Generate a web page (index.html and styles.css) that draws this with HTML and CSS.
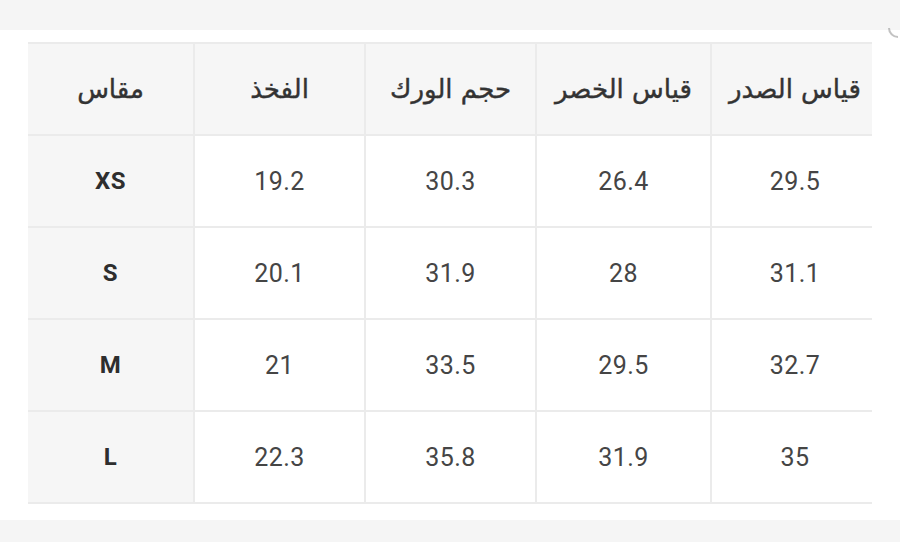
FILE: index.html
```html
<!DOCTYPE html>
<html lang="ar">
<head>
<meta charset="utf-8">
<title>جدول المقاسات</title>
<link rel="stylesheet" href="styles.css">
</head>
<body>
<div class="topbar"><span class="corner"></span></div>
<main class="main">
  <div class="frame">
    <div class="grid" dir="rtl">
      <div class="cell head">قياس الصدر</div>
      <div class="cell head">قياس الخصر</div>
      <div class="cell head">حجم الورك</div>
      <div class="cell head">الفخذ</div>
      <div class="cell head size">مقاس</div>

      <div class="cell">29.5</div>
      <div class="cell">26.4</div>
      <div class="cell">30.3</div>
      <div class="cell">19.2</div>
      <div class="cell size label">XS</div>

      <div class="cell">31.1</div>
      <div class="cell">28</div>
      <div class="cell">31.9</div>
      <div class="cell">20.1</div>
      <div class="cell size label">S</div>

      <div class="cell">32.7</div>
      <div class="cell">29.5</div>
      <div class="cell">33.5</div>
      <div class="cell">21</div>
      <div class="cell size label">M</div>

      <div class="cell">35</div>
      <div class="cell">31.9</div>
      <div class="cell">35.8</div>
      <div class="cell">22.3</div>
      <div class="cell size label">L</div>
    </div>
  </div>
</main>
<div class="bottombar"></div>
</body>
</html>
```
FILE: styles.css
```css
* { box-sizing: border-box; }
html, body { margin: 0; padding: 0; background: #fff; }
body {
  width: 900px;
  height: 542px;
  overflow: hidden;
  font-family: Roboto, "DejaVu Sans", sans-serif;
}
.topbar {
  height: 30px;
  background: #f5f5f5;
  position: relative;
}
.corner {
  position: absolute;
  right: 2px;
  top: 28px;
  width: 10px;
  height: 10px;
  border-left: 2px solid #9a9a9a;
  border-bottom: 2px solid #9a9a9a;
  border-bottom-left-radius: 10px;
  opacity: 0.6;
}
.main {
  height: 490px;
  padding: 12px 0 0 28px;
}
.frame {
  width: 844px;
  overflow: hidden;
}
.grid {
  display: grid;
  width: 852px;
  grid-template-columns: 168px 175px 171px 171px 167px;
  grid-auto-rows: 92px;
  border-top: 2px solid #ebebeb;
  border-right: 2px solid #ebebeb;
}
.cell {
  display: flex;
  align-items: center;
  justify-content: center;
  border-left: 2px solid #ebebeb;
  border-bottom: 2px solid #ebebeb;
  font-size: 25px;
  color: #454545;
  letter-spacing: 0.5px;
}
.head {
  background: #f6f6f6;
  font-family: "DejaVu Sans", sans-serif;
  font-size: 26px;
  color: #333;
  letter-spacing: 0;
  -webkit-text-stroke: 0.4px #333;
}
.size { background: #f6f6f6; }
.label {
  font-weight: 700;
  color: #2e2e2e;
  font-size: 24px;
}
.bottombar {
  height: 22px;
  background: #f5f5f5;
}
```
